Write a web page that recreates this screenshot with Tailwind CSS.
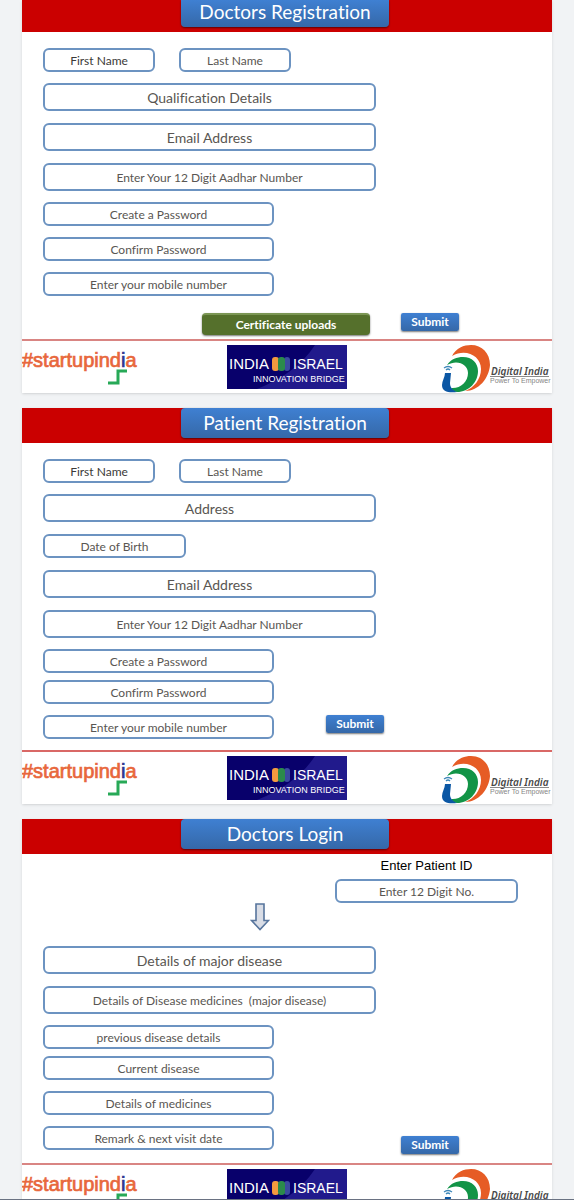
<!DOCTYPE html>
<html lang="en">
<head>
  <meta charset="UTF-8" />
  <meta name="viewport" content="width=device-width, initial-scale=1.0"/>
  <title>Doctors and Patients Registration</title>
  <script src="https://cdn.jsdelivr.net/npm/@tailwindcss/browser@4"></script>
</head>

<body class="bg-[#f1f3f5] font-[Lato,sans-serif] [font-variant-ligatures:none] text-[#595652]">
  <!-- shared logos -->
  <svg class="hidden">
    <symbol id="startup" viewBox="0 0 120 44">
      <text x="0" y="22" font-family="Liberation Sans, sans-serif" font-size="20" fill="#e8673c" stroke="#e8673c" stroke-width=".7">#startupind<tspan fill="#2f3590" stroke="#2f3590">i</tspan>a</text>
      <path d="M86 38H96V26H105" fill="none" stroke="#27a957" stroke-width="3"/>
    </symbol>
    <symbol id="israel" viewBox="0 0 120 44">
      <path fill="#08006b" d="M0 0H120V44H0Z"/>
      <path fill="#211a8c" d="M88 0H120V44H30Q70 28 88 0Z"/>
      <text x="2" y="24" font-family="Liberation Sans, sans-serif" font-size="15" fill="#fff">INDIA</text>
      <rect x="57" y="12" width="6" height="14" rx="3" fill="#3b4aa0"/>
      <rect x="45" y="12" width="7" height="14" rx="3" fill="#f49a3f"/>
      <rect x="51" y="12" width="7" height="14" rx="3" fill="#2b8b4b"/>
      <text x="66" y="24" font-family="Liberation Sans, sans-serif" font-size="14" fill="#fff">ISRAEL</text>
      <text x="26" y="37" font-family="Liberation Sans, sans-serif" font-size="9" fill="#fff">INNOVATION BRIDGE</text>
    </symbol>
    <symbol id="digital" viewBox="0 0 110 48">
      <path fill="#e65c25" d="M10 11C14 3 22 0 29 0C40 0 48 8 48 20C47 33 37 46 23 46C32 43 39 34 39 24C39 11 24 3 10 11Z"/>
      <path fill="#129447" d="M5 20C9 14 15 12 21 12C30 12 36 18 36 26C36 37 27 47 15 47C12 47 10 45 9 43C18 44 26 37 26 28C26 19 15 14 5 20Z"/>
      <path fill="#0b57a4" d="M3 28H9L8 38C8 42 10 45 15 47C7 48 0 47 0 40C0 36 3 32 3 28Z"/>
      <path d="M2 23Q6 20 10 23M4 25Q6 23 8 25" fill="none" stroke="#3c86b8" stroke-width="1.3"/>
      <text x="49" y="30" font-family="Noto Sans, sans-serif" font-size="10" font-style="italic" font-weight="600" fill="#474747">Digital India</text>
      <path d="M48 31.5H107" stroke="#8a8a8a" stroke-width="1"/>
      <text x="48" y="38" font-family="Liberation Sans, sans-serif" font-size="7" fill="#858585">Power To Empower</text>
    </symbol>
  </svg>

  <main class="h-screen overflow-hidden border-b border-gray-500 px-[22px]">
    <!-- Doctors registration -->
    <section class="bg-white shadow-sm">
      <header class="bg-[#cb0000] h-8 pl-[159px]">
        <h1 class="w-[208px] h-[27px] rounded-b bg-linear-to-b from-[#3f80d2] to-[#3568a8] text-white text-[19px] leading-6 text-center shadow-[0_1px_2px_#0008]">Doctors Registration</h1>
      </header>
      <form class="pl-[21px] pt-4">
        <div class="flex gap-6">
          <input aria-label="First Name" placeholder="First Name" class="w-28 h-6 rounded-md border-2 border-[#6c93c1] text-xs text-center placeholder:text-[#3b3a38]"/>
          <input aria-label="Last Name" placeholder="Last Name" class="w-28 h-6 rounded-md border-2 border-[#6c93c1] text-xs text-center placeholder:text-[#595652]"/>
        </div>
        <div class="mt-[11px] flex flex-col gap-3">
          <input aria-label="Qualification Details" placeholder="Qualification Details" class="w-[333px] h-7 rounded-md border-2 border-[#6c93c1] text-sm text-center placeholder:text-[#595652]"/>
          <input type="email" aria-label="Email Address" placeholder="Email Address" class="w-[333px] h-7 rounded-md border-2 border-[#6c93c1] text-sm text-center placeholder:text-[#595652]"/>
          <input aria-label="Aadhar Number" placeholder="Enter Your 12 Digit Aadhar Number" class="w-[333px] h-7 rounded-md border-2 border-[#6c93c1] text-xs text-center placeholder:text-[#595652]"/>
        </div>
        <div class="mt-[11px] flex flex-col gap-[11px]">
          <input type="password" aria-label="Create a Password" placeholder="Create a Password" class="w-[231px] h-6 rounded-md border-2 border-[#6c93c1] text-xs text-center placeholder:text-[#595652]"/>
          <input type="password" aria-label="Confirm Password" placeholder="Confirm Password" class="w-[231px] h-6 rounded-md border-2 border-[#6c93c1] text-xs text-center placeholder:text-[#595652]"/>
          <input type="tel" aria-label="Mobile number" placeholder="Enter your mobile number" class="w-[231px] h-6 rounded-md border-2 border-[#6c93c1] text-xs text-center placeholder:text-[#595652]"/>
        </div>
        <div class="mt-[17px] pl-[159px] h-[26px] flex items-start gap-[31px]">
          <button type="button" class="w-[168px] h-[22px] rounded-sm bg-[#55702c] border-t-2 border-[#7b9654] text-white text-xs font-bold shadow-[0_1px_2px_#0008]">Certificate uploads</button>
          <button type="button" class="w-[58px] h-[18px] rounded-xs bg-linear-to-b from-[#3f80d2] to-[#3568a8] text-white text-xs font-bold shadow-[0_1px_2px_#0008]">Submit</button>
        </div>
      </form>
      <footer class="border-t-2 border-[#d98583] h-[54px] pt-1 flex items-start">
        <svg class="w-[120px] h-11" role="img" aria-label="startupindia"><use href="#startup"/></svg>
        <svg class="w-[120px] h-11 ml-[85px]" role="img" aria-label="India Israel Innovation Bridge"><use href="#israel"/></svg>
        <svg class="w-[110px] h-12 ml-auto" role="img" aria-label="Digital India"><use href="#digital"/></svg>
      </footer>
    </section>

    <!-- Patient registration -->
    <section class="mt-[15px] bg-white shadow-sm">
      <header class="bg-[#cb0000] h-[35px] pl-[159px]">
        <h1 class="w-[208px] h-[30px] rounded bg-linear-to-b from-[#3f80d2] to-[#3568a8] text-white text-[19px] leading-[30px] text-center shadow-[0_1px_2px_#0008]">Patient Registration</h1>
      </header>
      <form class="pl-[21px] pt-4">
        <div class="flex gap-6">
          <input aria-label="First Name" placeholder="First Name" class="w-28 h-6 rounded-md border-2 border-[#6c93c1] text-xs text-center placeholder:text-[#3b3a38]"/>
          <input aria-label="Last Name" placeholder="Last Name" class="w-28 h-6 rounded-md border-2 border-[#6c93c1] text-xs text-center placeholder:text-[#595652]"/>
        </div>
        <div class="mt-[11px] flex flex-col gap-3">
          <input aria-label="Address" placeholder="Address" class="w-[333px] h-7 rounded-md border-2 border-[#6c93c1] text-sm text-center placeholder:text-[#595652]"/>
          <input aria-label="Date of Birth" placeholder="Date of Birth" class="w-[143px] h-6 rounded-md border-2 border-[#6c93c1] text-xs text-center placeholder:text-[#595652]"/>
          <input type="email" aria-label="Email Address" placeholder="Email Address" class="w-[333px] h-7 rounded-md border-2 border-[#6c93c1] text-sm text-center placeholder:text-[#595652]"/>
          <input aria-label="Aadhar Number" placeholder="Enter Your 12 Digit Aadhar Number" class="w-[333px] h-7 rounded-md border-2 border-[#6c93c1] text-xs text-center placeholder:text-[#595652]"/>
        </div>
        <div class="mt-[11px] flex flex-col gap-[7px]">
          <input type="password" aria-label="Create a Password" placeholder="Create a Password" class="w-[231px] h-6 rounded-md border-2 border-[#6c93c1] text-xs text-center placeholder:text-[#595652]"/>
          <input type="password" aria-label="Confirm Password" placeholder="Confirm Password" class="w-[231px] h-6 rounded-md border-2 border-[#6c93c1] text-xs text-center placeholder:text-[#595652]"/>
        </div>
        <div class="mt-[11px] h-[35px] flex items-start gap-[52px]">
          <input type="tel" aria-label="Mobile number" placeholder="Enter your mobile number" class="w-[231px] h-6 rounded-md border-2 border-[#6c93c1] text-xs text-center placeholder:text-[#595652]"/>
          <button type="button" class="w-[58px] h-[18px] rounded-xs bg-linear-to-b from-[#3f80d2] to-[#3568a8] text-white text-xs font-bold shadow-[0_1px_2px_#0008]">Submit</button>
        </div>
      </form>
      <footer class="border-t-2 border-[#d96866] h-[54px] pt-1 flex items-start">
        <svg class="w-[120px] h-11" role="img" aria-label="startupindia"><use href="#startup"/></svg>
        <svg class="w-[120px] h-11 ml-[85px]" role="img" aria-label="India Israel Innovation Bridge"><use href="#israel"/></svg>
        <svg class="w-[110px] h-12 ml-auto" role="img" aria-label="Digital India"><use href="#digital"/></svg>
      </footer>
    </section>

    <!-- Doctors login -->
    <section class="mt-[15px] bg-white shadow-sm">
      <header class="bg-[#cb0000] h-[35px] pl-[159px]">
        <h1 class="w-[208px] h-[30px] rounded bg-linear-to-b from-[#3f80d2] to-[#3568a8] text-white text-[19px] leading-[30px] text-center shadow-[0_1px_2px_#0008]">Doctors Login</h1>
      </header>
      <form class="pl-[21px] pt-1">
        <div class="flex flex-col items-end pr-[34px]">
          <label for="patient" class="w-[183px] text-center text-black text-[13px] leading-4 font-['Liberation_Sans',sans-serif] mb-[5px]">Enter Patient ID</label>
          <input id="patient" placeholder="Enter 12 Digit No." class="w-[183px] h-6 rounded-md border-2 border-[#6c93c1] text-xs text-center placeholder:text-[#595652]"/>
        </div>
        <svg class="ml-[207px] w-5 h-7" viewBox="0 0 20 28" fill="#d9dde6" stroke="#57759d" stroke-width="1.6"><path d="M6 1H14V17.5H18.5L10 26.5L1.5 17.5H6Z"/></svg>
        <div class="mt-[15px] flex flex-col gap-3">
          <input aria-label="Details of major disease" placeholder="Details of major disease" class="w-[333px] h-7 rounded-md border-2 border-[#6c93c1] text-sm text-center placeholder:text-[#595652]"/>
          <input aria-label="Details of Disease medicines" placeholder="Details of Disease medicines &nbsp;(major disease)" class="w-[333px] h-7 rounded-md border-2 border-[#6c93c1] text-xs text-center placeholder:text-[#595652]"/>
        </div>
        <div class="mt-[11px] flex flex-col gap-[7px]">
          <input aria-label="Previous disease details" placeholder="previous disease details" class="w-[231px] h-6 rounded-md border-2 border-[#6c93c1] text-xs text-center placeholder:text-[#595652]"/>
          <input aria-label="Current disease" placeholder="Current disease" class="w-[231px] h-6 rounded-md border-2 border-[#6c93c1] text-xs text-center placeholder:text-[#595652]"/>
        </div>
        <input aria-label="Details of medicines" placeholder="Details of medicines" class="mt-[11px] block w-[231px] h-6 rounded-md border-2 border-[#6c93c1] text-xs text-center placeholder:text-[#595652]"/>
        <div class="mt-[11px] h-[37px] flex items-start gap-[127px]">
          <input aria-label="Remark and next visit date" placeholder="Remark &amp; next visit date" class="w-[231px] h-6 rounded-md border-2 border-[#6c93c1] text-xs text-center placeholder:text-[#595652]"/>
          <button type="button" class="mt-[10px] w-[58px] h-[18px] rounded-xs bg-linear-to-b from-[#3f80d2] to-[#3568a8] text-white text-xs font-bold shadow-[0_1px_2px_#0008]">Submit</button>
        </div>
      </form>
      <footer class="border-t-2 border-[#d98583] h-[54px] pt-1 flex items-start">
        <svg class="w-[120px] h-11" role="img" aria-label="startupindia"><use href="#startup"/></svg>
        <svg class="w-[120px] h-11 ml-[85px]" role="img" aria-label="India Israel Innovation Bridge"><use href="#israel"/></svg>
        <svg class="w-[110px] h-12 ml-auto" role="img" aria-label="Digital India"><use href="#digital"/></svg>
      </footer>
    </section>
  </main>
</body>
</html>
